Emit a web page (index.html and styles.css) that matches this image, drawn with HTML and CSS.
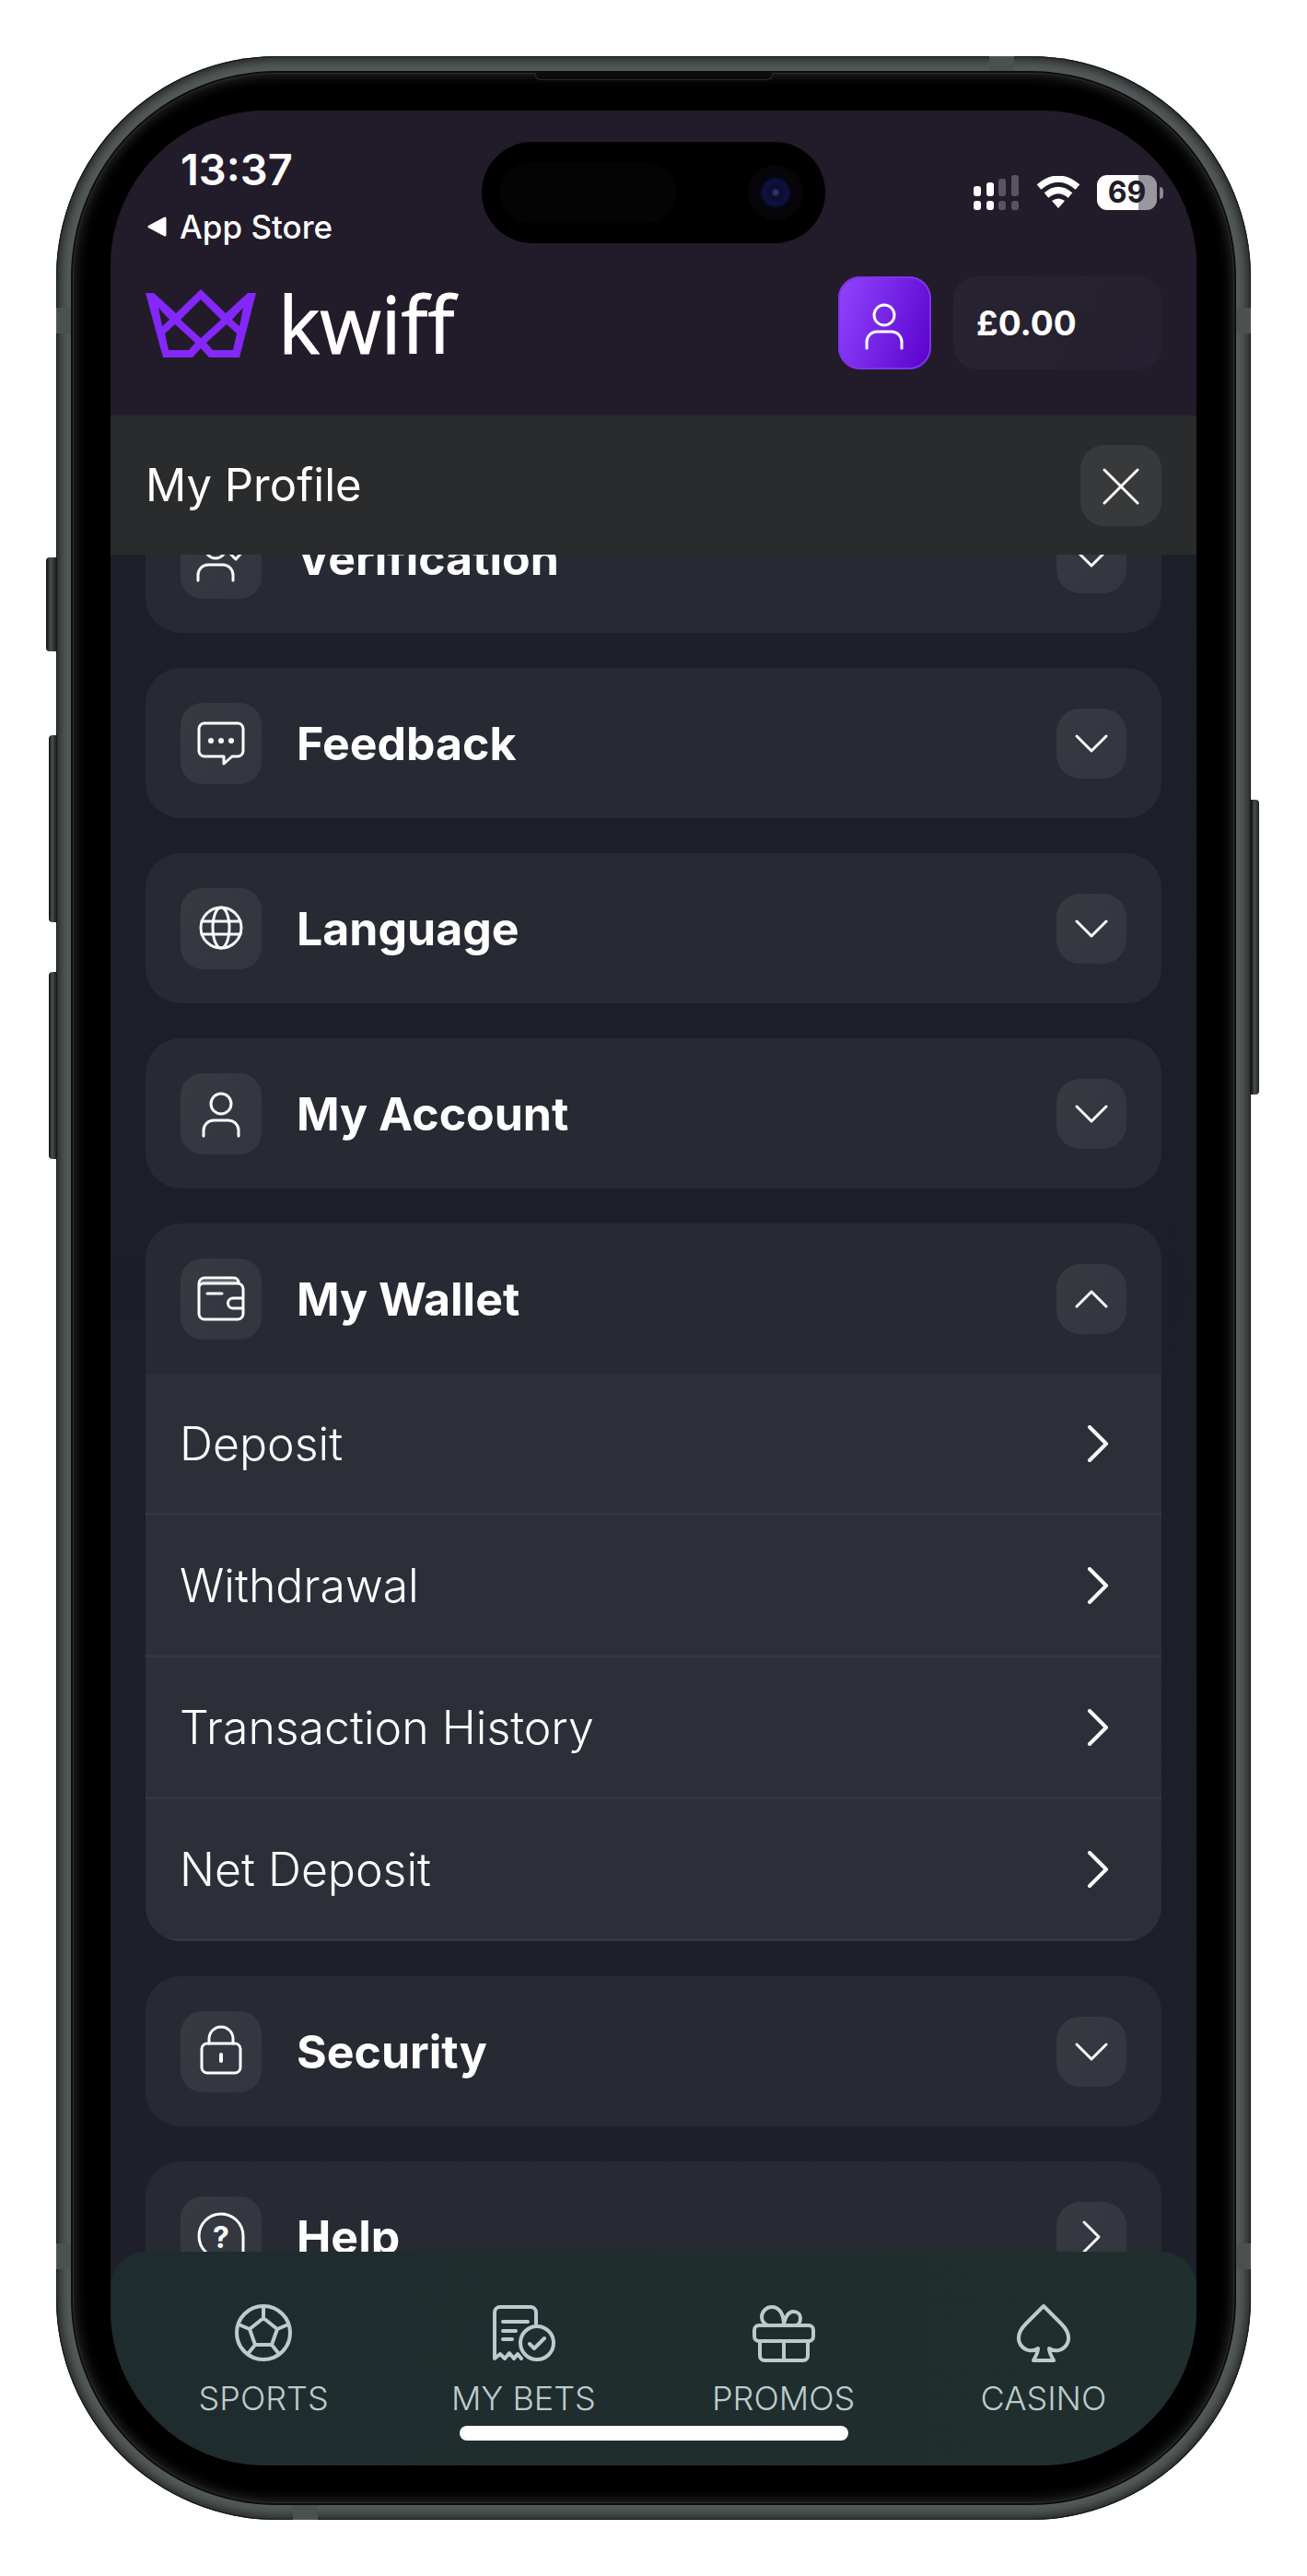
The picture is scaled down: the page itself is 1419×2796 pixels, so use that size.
FILE: index.html
```html
<!DOCTYPE html>
<html lang="en">
<head>
<meta charset="utf-8">
<meta name="viewport" content="width=device-width, initial-scale=1">
<title>kwiff – My Profile</title>
<link rel="stylesheet" href="styles.css">
</head>
<body>
<svg class="defs" aria-hidden="true">
  <symbol id="chev-down" viewBox="0 0 76 76"><path d="M22 30L38 46L54 30"/></symbol>
  <symbol id="chev-up" viewBox="0 0 76 76"><path d="M22 46L38 30L54 46"/></symbol>
  <symbol id="chev-right" viewBox="0 0 76 76"><path d="M30 22L46 38L30 54"/></symbol>
  <symbol id="arrow" viewBox="0 0 24 40"><path d="M3 2L21 20L3 38"/></symbol>
</svg>

<div class="device">
  <span class="key key--action"></span>
  <span class="key key--up"></span>
  <span class="key key--down"></span>
  <span class="key key--power"></span>
  <span class="band band--top"></span>
  <span class="band band--bottom"></span>
  <span class="band band--left-top"></span>
  <span class="band band--left-bottom"></span>
  <span class="band band--right-top"></span>
  <span class="band band--right-bottom"></span>
  <div class="bezel">
    <span class="speaker"></span>
    <div class="screen">

      <header class="top">
        <div class="status">
          <div class="status__left">
            <div class="status__time">13:37</div>
            <a class="status__back" href="#">
              <svg width="24" height="24" viewBox="0 0 24 24" aria-hidden="true"><path d="M21 3V21L4 12Z" fill="#fff" stroke="#fff" stroke-width="3" stroke-linejoin="round"/></svg>
              App Store
            </a>
          </div>
          <div class="island"><span class="island__sensor"></span><span class="island__camera"></span></div>
          <div class="status__right">
            <svg width="50" height="38" viewBox="0 0 50 38" fill="#fff" aria-label="Signal">
              <rect x="0" y="12" width="8" height="11" rx="3"/><rect x="14" y="8" width="8" height="15" rx="3"/>
              <rect x="27" y="4" width="8" height="19" rx="3" opacity=".25"/><rect x="41" y="0" width="8" height="23" rx="3" opacity=".25"/>
              <rect x="0" y="28" width="8" height="10" rx="3"/><rect x="14" y="28" width="8" height="10" rx="3"/>
              <rect x="27" y="28" width="8" height="10" rx="3" opacity=".25"/><rect x="41" y="28" width="8" height="10" rx="3" opacity=".25"/>
            </svg>
            <svg width="48" height="36" viewBox="0 0 48 36" aria-label="Wi-Fi">
              <path d="M3 12Q24 -6 45 12" fill="none" stroke="#fff" stroke-width="7"/>
              <path d="M11 21Q24 10 37 21" fill="none" stroke="#fff" stroke-width="7"/>
              <path d="M17 27Q24 22 31 27L24 35Z" fill="#fff"/>
            </svg>
            <div class="battery"><span class="battery__cell">69</span><span class="battery__nub"></span></div>
          </div>
        </div>
        <div class="brandbar">
          <a class="logo" href="#">
            <svg width="120" height="74" viewBox="0 0 120 74" aria-hidden="true">
              <path fill="#8427fa" fill-rule="evenodd" d="M0 4H9L33 26L60 0L87 26L111 4H120L102 74H69L60 64L51 74H19ZM14 20L26 33L18 40ZM106 20L94 33L102 40ZM60 11L82 33L60 53L38 33ZM32 38L54 58L47 66H25L21 48ZM88 38L66 58L73 66H95L99 48Z"/>
            </svg>
            <span class="logo__word">kwiff</span>
          </a>
          <button class="user" type="button" aria-label="Profile">
            <svg class="icon" width="100" height="100" viewBox="0 0 100 100"><circle cx="50" cy="41" r="11"/><path d="M31 77V70A11 11 0 0 1 42 59H58A11 11 0 0 1 69 70V77"/></svg>
          </button>
          <button class="balance" type="button">£0.00</button>
        </div>
      </header>

      <div class="titlebar">
        <h1 class="titlebar__text">My Profile</h1>
        <button class="close" type="button" aria-label="Close">
          <svg class="icon" width="88" height="88" viewBox="0 0 88 88"><path d="M26 27L62 63M62 27L26 63"/></svg>
        </button>
      </div>

      <main class="list">
        <section class="card">
          <button class="card__head" type="button" aria-expanded="false">
            <span class="tile"><svg class="icon" viewBox="0 0 88 88"><circle cx="38" cy="33" r="11"/><path d="M19 68V62A11 11 0 0 1 30 51H46A11 11 0 0 1 57 62V68M54 39L60 45L70 34"/></svg></span>
            <span class="card__name">Verification</span>
            <span class="toggle"><svg class="icon"><use href="#chev-down"/></svg></span>
          </button>
        </section>
        <section class="card">
          <button class="card__head" type="button" aria-expanded="false">
            <span class="tile"><svg class="icon" viewBox="0 0 88 88"><path d="M26 22H62A6 6 0 0 1 68 28V52A6 6 0 0 1 62 58H56L47 66V58H26A6 6 0 0 1 20 52V28A6 6 0 0 1 26 22Z"/><g fill="#fff" stroke="none"><circle cx="33" cy="41" r="3"/><circle cx="44" cy="41" r="3"/><circle cx="55" cy="41" r="3"/></g></svg></span>
            <span class="card__name">Feedback</span>
            <span class="toggle"><svg class="icon"><use href="#chev-down"/></svg></span>
          </button>
        </section>
        <section class="card">
          <button class="card__head" type="button" aria-expanded="false">
            <span class="tile"><svg class="icon" viewBox="0 0 88 88"><circle cx="44" cy="43" r="22"/><ellipse cx="44" cy="43" rx="9" ry="22"/><path d="M23 36H65M23 50H65"/></svg></span>
            <span class="card__name">Language</span>
            <span class="toggle"><svg class="icon"><use href="#chev-down"/></svg></span>
          </button>
        </section>
        <section class="card">
          <button class="card__head" type="button" aria-expanded="false">
            <span class="tile"><svg class="icon" viewBox="0 0 88 88"><circle cx="44" cy="33" r="11"/><path d="M25 68V62A11 11 0 0 1 36 51H52A11 11 0 0 1 63 62V68"/></svg></span>
            <span class="card__name">My Account</span>
            <span class="toggle"><svg class="icon"><use href="#chev-down"/></svg></span>
          </button>
        </section>
        <section class="card">
          <button class="card__head" type="button" aria-expanded="true">
            <span class="tile"><svg class="icon" viewBox="0 0 88 88"><path d="M24 25H62" stroke="#77777c"/><path d="M20 32A5 5 0 0 1 25 27H62A6 6 0 0 1 68 33V60A6 6 0 0 1 62 66H26A6 6 0 0 1 20 60V27A6 6 0 0 1 26 21H58A5 5 0 0 1 63 26M68 43H57A5 5 0 0 0 57 54H68M29 38H45"/></svg></span>
            <span class="card__name">My Wallet</span>
            <span class="toggle"><svg class="icon"><use href="#chev-up"/></svg></span>
          </button>
          <nav class="panel" aria-label="My Wallet">
            <a class="panel__row" href="#">Deposit<svg class="icon arrow"><use href="#arrow"/></svg></a>
            <a class="panel__row" href="#">Withdrawal<svg class="icon arrow"><use href="#arrow"/></svg></a>
            <a class="panel__row" href="#">Transaction History<svg class="icon arrow"><use href="#arrow"/></svg></a>
            <a class="panel__row" href="#">Net Deposit<svg class="icon arrow"><use href="#arrow"/></svg></a>
          </nav>
        </section>
        <section class="card">
          <button class="card__head" type="button" aria-expanded="false">
            <span class="tile"><svg class="icon" viewBox="0 0 88 88"><rect x="23" y="35" width="42" height="32" rx="6"/><path d="M31 35V30A13 13 0 0 1 57 30V35"/><path d="M44 47V54" stroke-width="4"/></svg></span>
            <span class="card__name">Security</span>
            <span class="toggle"><svg class="icon"><use href="#chev-down"/></svg></span>
          </button>
        </section>
        <section class="card">
          <button class="card__head" type="button">
            <span class="tile"><svg class="icon" viewBox="0 0 88 88"><path d="M68 43V67H44A24 24 0 1 1 68 43Z"/><text class="qmark" x="44" y="56">?</text></svg></span>
            <span class="card__name">Help</span>
            <span class="toggle"><svg class="icon"><use href="#chev-right"/></svg></span>
          </button>
        </section>
      </main>

      <footer class="dock">
        <nav class="tabs" aria-label="Main">
          <a class="tab" href="#">
            <svg class="tab__icon" viewBox="0 0 72 64"><circle cx="36" cy="32" r="29"/><path d="M36 16L51 28L45 45H27L21 28ZM36 16V3M51 28L63 23M45 45L53 55M27 45L19 55M21 28L9 23"/></svg>
            SPORTS
          </a>
          <a class="tab" href="#">
            <svg class="tab__icon" viewBox="0 0 72 64"><path d="M50 22V10A6 6 0 0 0 44 4H11A6 6 0 0 0 5 10V60L11 55L16 60L21 54L26 60L30 55L34 60M14 20H41M14 30H28M14 39H24"/><circle cx="51" cy="43" r="18"/><path d="M43 44L48 49L59 38"/></svg>
            MY BETS
          </a>
          <a class="tab" href="#">
            <svg class="tab__icon" viewBox="0 0 72 64"><rect x="4" y="24" width="64" height="17" rx="5"/><path d="M10 41V57A5 5 0 0 0 15 62H57A5 5 0 0 0 62 57V41M36 41V62M36 24C36 10 30 4 23 4C16 4 12 10 12 15C12 20 16 24 20 24M36 24C37 14 42 9 46 9C51 9 54 12 54 16C54 20 52 24 48 24"/></svg>
            PROMOS
          </a>
          <a class="tab" href="#">
            <svg class="tab__icon" viewBox="0 0 72 64"><path d="M36 3L55 22C63 30 65 38 61 45C56 52 48 53 42 49C42 54 45 58 47 62H25C27 58 30 54 30 49C24 53 16 52 11 45C7 38 9 30 17 22Z"/></svg>
            CASINO
          </a>
        </nav>
        <div class="home"></div>
      </footer>

    </div>
  </div>
</div>
</body>
</html>
```
FILE: styles.css
```css
* { box-sizing: border-box; }

body {
  margin: 0;
  height: 100vh;
  padding: 61px;
  background: #fff;
  color: #fff;
  font-family: Inter, "Liberation Sans", sans-serif;
}

button { border: 0; color: inherit; font: inherit; cursor: pointer; padding: 0; }
a { color: inherit; text-decoration: none; }
svg { display: block; flex: none; }
.defs { position: absolute; width: 0; height: 0; }

.icon {
  fill: none;
  stroke: #fff;
  stroke-width: 3;
  stroke-linecap: round;
  stroke-linejoin: round;
}

/* Phone body */
.device {
  position: relative;
  height: 100%;
  padding: 18px;
  border-radius: 240px;
  background: #555a5b;
  box-shadow: inset 0 0 0 1px #161818, inset 0 0 12px 4px #1e2121;
}

.bezel {
  position: relative;
  height: 100%;
  padding: 41px;
  border-radius: 222px;
  background: #000;
  box-shadow: 0 0 0 2px #0c0d0d, inset 0 0 0 1px #2a2b2b, inset 0 0 14px 2px #2e2e2e;
}

.speaker {
  position: absolute;
  top: 0;
  left: 50%;
  width: 258px;
  height: 8px;
  margin-left: -129px;
  border: 1px solid #2c2c2c;
  border-top: 0;
  border-radius: 0 0 6px 6px;
  background: #0c0c0c;
}

.key { position: absolute; background: linear-gradient(90deg, #0d0f0f, #4a504f 45%, #1e2121); }
.key--action, .key--up, .key--down { right: 100%; border-radius: 4px 0 0 4px; }
.key--action { top: 544px; width: 11px; height: 102px; }
.key--up { top: 737px; width: 8px; height: 203px; }
.key--down { top: 994px; width: 8px; height: 203px; }
.key--power { left: 100%; top: 807px; width: 9px; height: 320px; border-radius: 0 4px 4px 0; }

.band { position: absolute; background: #4b5050; }
.band--top, .band--bottom { width: 27px; height: 16px; }
.band--top { top: 0; right: 257px; }
.band--bottom { bottom: 0; left: 257px; }
.band--left-top, .band--left-bottom { left: 0; width: 16px; height: 28px; }
.band--right-top, .band--right-bottom { right: 0; width: 16px; height: 28px; }
.band--left-top, .band--right-top { top: 273px; }
.band--left-bottom, .band--right-bottom { bottom: 272px; }

.screen {
  display: flex;
  flex-direction: column;
  height: 100%;
  overflow: hidden;
  border-radius: 168px;
  background: linear-gradient(180deg, #1e202a, #1c1f27 50%, #1e202a);
}

/* Status bar and brand row */
.top {
  flex: none;
  padding: 34px 38px 50px;
  background: #221b2a;
}

.status {
  display: grid;
  grid-template-columns: 1fr 373px 1fr;
  align-items: center;
  margin-bottom: 36px;
}

.status__left { padding-top: 2px; }
.status__time {
  padding-left: 38px;
  font-size: 47px;
  line-height: 56px;
  font-weight: 600;
}

.status__back {
  display: flex;
  align-items: center;
  gap: 13px;
  margin-top: 16px;
  font-size: 35px;
  line-height: 36px;
  font-weight: 500;
}

.island {
  display: flex;
  align-items: center;
  justify-content: space-between;
  height: 110px;
  padding: 0 24px 0 20px;
  border-radius: 55px;
  background: #000;
}

.island__sensor { width: 192px; height: 66px; border-radius: 33px; background: #040404; }
.island__camera {
  width: 60px;
  height: 60px;
  border-radius: 50%;
  background: radial-gradient(circle, #34346c 0 4%, #0c0c30 12%, #0f1240 32%, #060510 40%, #060406 70%);
}

.status__right {
  display: flex;
  align-items: center;
  justify-content: flex-end;
  gap: 18px;
  margin-right: -2px;
}

.battery { display: flex; align-items: center; gap: 3px; }
.battery__cell {
  width: 65px;
  height: 38px;
  border-radius: 11px;
  background: linear-gradient(90deg, #fff 69%, #9a969e 69%);
  color: #221b2a;
  font-size: 32px;
  line-height: 38px;
  font-weight: 700;
  text-align: center;
}
.battery__nub { width: 4px; height: 13px; border-radius: 0 4px 4px 0; background: #8c8792; }

.brandbar { display: flex; align-items: center; }
.logo { display: flex; align-items: center; gap: 24px; margin-right: auto; }
.logo__word {
  font-family: "Open Sans", "Noto Sans", sans-serif;
  font-size: 86px;
  line-height: 101px;
  font-weight: 500;
  -webkit-text-stroke: 1px #fff;
}

.user {
  width: 101px;
  height: 101px;
  margin-right: 24px;
  border-radius: 24px;
  background: linear-gradient(110deg, #9146ff, #5a00cc);
  box-shadow: inset 0 0 0 2px #7e34e8;
}

.balance {
  width: 226px;
  height: 101px;
  padding-left: 25px;
  border-radius: 26px;
  background: linear-gradient(120deg, #28232f, #25202f);
  font-size: 37px;
  font-weight: 700;
  text-align: left;
}

/* Page title */
.titlebar {
  position: relative;
  z-index: 1;
  flex: none;
  display: flex;
  align-items: center;
  justify-content: space-between;
  height: 151px;
  padding: 0 38px;
  background: #2a2b2c;
}
.titlebar__text { margin: 0; font-size: 49px; line-height: 60px; font-weight: 400; }
.close {
  width: 88px;
  height: 88px;
  border-radius: 26px;
  background: #38393b;
}

/* Accordion list, scrolled part-way down */
.list {
  flex: 1;
  min-height: 0;
  display: flex;
  flex-direction: column;
  gap: 38px;
  margin-top: -78px;
  margin-bottom: -38px;
  padding: 0 38px;
  overflow: hidden;
}

.card { flex: none; border-radius: 38px; overflow: hidden; background: #272a33; }
.card__head {
  display: flex;
  align-items: center;
  gap: 38px;
  width: 100%;
  height: 163px;
  padding: 0 38px;
  background: none;
  text-align: left;
}
.card__name { flex: 1; font-size: 50px; line-height: 60px; font-weight: 700; }

.tile, .toggle { flex: none; background: linear-gradient(120deg, #383a42, #33353f); }
.tile { width: 88px; height: 88px; border-radius: 24px; }
.toggle { width: 76px; height: 76px; border-radius: 26px; }
.tile .icon, .toggle .icon { width: 100%; height: 100%; }
.qmark {
  fill: #fff;
  stroke: none;
  font-size: 32px;
  font-weight: 700;
  text-anchor: middle;
}

.panel { background: #2d2f38; }
.panel__row {
  display: flex;
  align-items: center;
  justify-content: space-between;
  height: 154px;
  padding: 0 57px 0 37px;
  border-bottom: 3px solid #353740;
  font-size: 50px;
  font-weight: 300;
}
.arrow { width: 24px; height: 40px; stroke-width: 4; }

/* Bottom navigation */
.dock {
  position: relative;
  z-index: 1;
  flex: none;
  padding: 56px 25px 27px;
  border-radius: 38px 38px 0 0;
  background: linear-gradient(90deg, #1f2c2d, #202e2e);
}
.tabs { display: grid; grid-template-columns: repeat(4, 1fr); }
.tab {
  display: flex;
  flex-direction: column;
  align-items: center;
  gap: 17px;
  color: #bccccd;
  font-size: 36px;
  line-height: 44px;
  font-weight: 300;
}
.tab__icon {
  width: 72px;
  height: 64px;
  fill: none;
  stroke: #bccccd;
  stroke-width: 4;
  stroke-linecap: round;
  stroke-linejoin: round;
}
.home {
  width: 422px;
  height: 16px;
  margin: 8px auto 0;
  border-radius: 8px;
  background: #fff;
}
```
